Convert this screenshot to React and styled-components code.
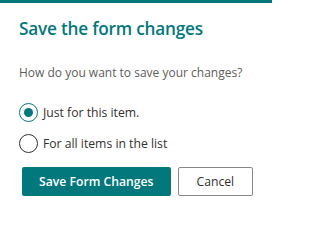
import React, { useState } from 'react';
import styled, { createGlobalStyle } from 'styled-components';

const teal = '#03787c';

const GlobalStyle = createGlobalStyle`
  body {
    margin: 0;
    background: #ffffff;
    font-family: "Open Sans", "Noto Sans", sans-serif;
  }
`;

const options = [
  { id: 'item', label: 'Just for this item.' },
  { id: 'list', label: 'For all items in the list' },
];

function App() {
  const [choice, setChoice] = useState('item');

  return (
    <>
      <GlobalStyle />
      <Dialog>
        <Title>Save the form changes</Title>
        <Subtitle>How do you want to save your changes?</Subtitle>

        <Choices>
          {options.map((opt) => (
            <Choice key={opt.id} onClick={() => setChoice(opt.id)}>
              <Circle checked={choice === opt.id} />
              <ChoiceLabel>{opt.label}</ChoiceLabel>
            </Choice>
          ))}
        </Choices>

        <Footer>
          <PrimaryButton>Save Form Changes</PrimaryButton>
          <DefaultButton>Cancel</DefaultButton>
        </Footer>
      </Dialog>
    </>
  );
}

export default App;

const Dialog = styled.div`
  width: 272px;
  height: 217px;
  box-sizing: border-box;
  border-top: 3px solid ${teal};
  padding: 0 19px 0 19px;
  display: flex;
  flex-direction: column;
`;

const Title = styled.h1`
  margin: 14px 0 0 0;
  font-size: 17.2px;
  line-height: 24px;
  font-weight: 600;
  color: ${teal};
  letter-spacing: -0.2px;
`;

const Subtitle = styled.p`
  margin: 23px 0 0 0;
  font-size: 12px;
  line-height: 18px;
  color: #605e5c;
`;

const Choices = styled.div`
  margin-top: 21px;
  display: flex;
  flex-direction: column;
  gap: 12px;
`;

const Choice = styled.label`
  display: flex;
  align-items: center;
  gap: 5px;
  cursor: pointer;
`;

const Circle = styled.span`
  position: relative;
  width: 19px;
  height: 19px;
  box-sizing: border-box;
  border-radius: 50%;
  border: 1px solid ${(p) => (p.checked ? teal : '#323130')};
  flex-shrink: 0;

  &::after {
    content: '';
    display: ${(p) => (p.checked ? 'block' : 'none')};
    position: absolute;
    top: 4px;
    left: 4px;
    width: 9px;
    height: 9px;
    border-radius: 50%;
    background: ${teal};
  }
`;

const ChoiceLabel = styled.span`
  font-size: 12.2px;
  line-height: 19px;
  color: #323130;
`;

const Footer = styled.div`
  margin-top: 14px;
  padding-left: 3px;
  display: flex;
  gap: 7px;
`;

const PrimaryButton = styled.button`
  height: 29px;
  width: 150px;
  border: none;
  border-radius: 2px;
  background: ${teal};
  color: #ffffff;
  font-family: inherit;
  font-size: 12.2px;
  font-weight: 600;
  padding: 0;
`;

const DefaultButton = styled.button`
  height: 29px;
  width: 76px;
  box-sizing: border-box;
  border: 1px solid #8a8886;
  border-radius: 2px;
  background: #ffffff;
  color: #323130;
  font-family: inherit;
  font-size: 12.2px;
  padding: 0;
`;
